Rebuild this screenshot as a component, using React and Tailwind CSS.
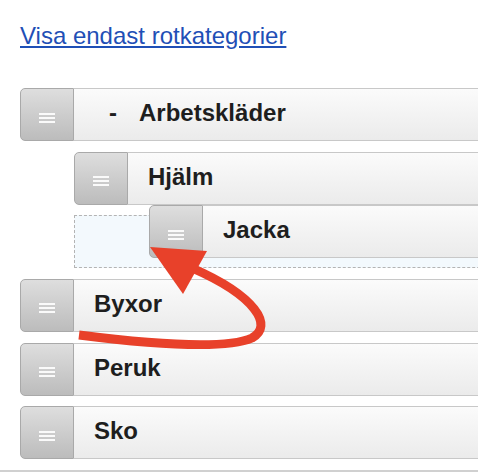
import React from 'react';

const Grip = () => (
  <svg width="16" height="10" viewBox="0 0 16 10" className="block">
    <rect x="0" y="0" width="16" height="2" fill="#fafafa" />
    <rect x="0" y="4" width="16" height="2" fill="#fafafa" />
    <rect x="0" y="8" width="16" height="2" fill="#fafafa" />
  </svg>
);

const Item = ({ label, prefix, className = '' }) => (
  <div className={`flex h-[53px] ${className}`}>
    <div className="w-[54px] shrink-0 flex justify-center items-center pt-[6px] rounded-l-[5px] border border-[#a9a9a9] bg-gradient-to-b from-[#dedede] to-[#bcbcbc]">
      <Grip />
    </div>
    <div className="flex-1 flex items-center pb-[3px] pl-[20px] border border-l-0 border-[#c8c8c8] bg-gradient-to-b from-[#fbfbfb] to-[#ebebeb] text-[24px] font-bold text-[#1e1e1e]">
      {prefix && <span className="ml-[15px] mr-[22px]">{prefix}</span>}
      <span>{label}</span>
    </div>
  </div>
);

export default function App() {
  return (
    <div className="relative w-[478px] h-[472px] overflow-hidden bg-white" style={{ fontFamily: '"Liberation Sans", Arial, sans-serif' }}>
      <div className="pl-[20px] pt-[22px]">
        <a href="#" className="text-[24px] leading-[28px] text-[#1f4fb6] underline">Visa endast rotkategorier</a>
      </div>

      <div className="mt-[37px] pl-[20px] flex flex-col gap-[10.67px] w-[520px]">
        <Item label="Arbetskläder" prefix="-" />
        <Item label="Hjälm" className="ml-[54px]" />
        <div className="ml-[54px] h-[53px] border border-dashed border-[#b4b4b4] bg-[#f3f9fd]" />
        <Item label="Byxor" />
        <Item label="Peruk" />
        <Item label="Sko" />
        <div className="-ml-[20px] h-[20px] border-t-2 border-[#d0d0d0] bg-[#f2f2f2]" />
      </div>

      {/* item being dragged */}
      <div className="absolute left-[149px] top-[205px] w-[360px]">
        <Item label="Jacka" />
      </div>

      <svg className="absolute left-0 top-0" width="478" height="472" viewBox="0 0 478 472">
        <path
          d="M79 335 C 150 344, 225 350, 252 338 C 274 326, 256 296, 192 268"
          fill="none"
          stroke="#e8412a"
          strokeWidth="9"
        />
        <polygon points="150,247 207,251 183,294" fill="#e8412a" />
      </svg>
    </div>
  );
}
